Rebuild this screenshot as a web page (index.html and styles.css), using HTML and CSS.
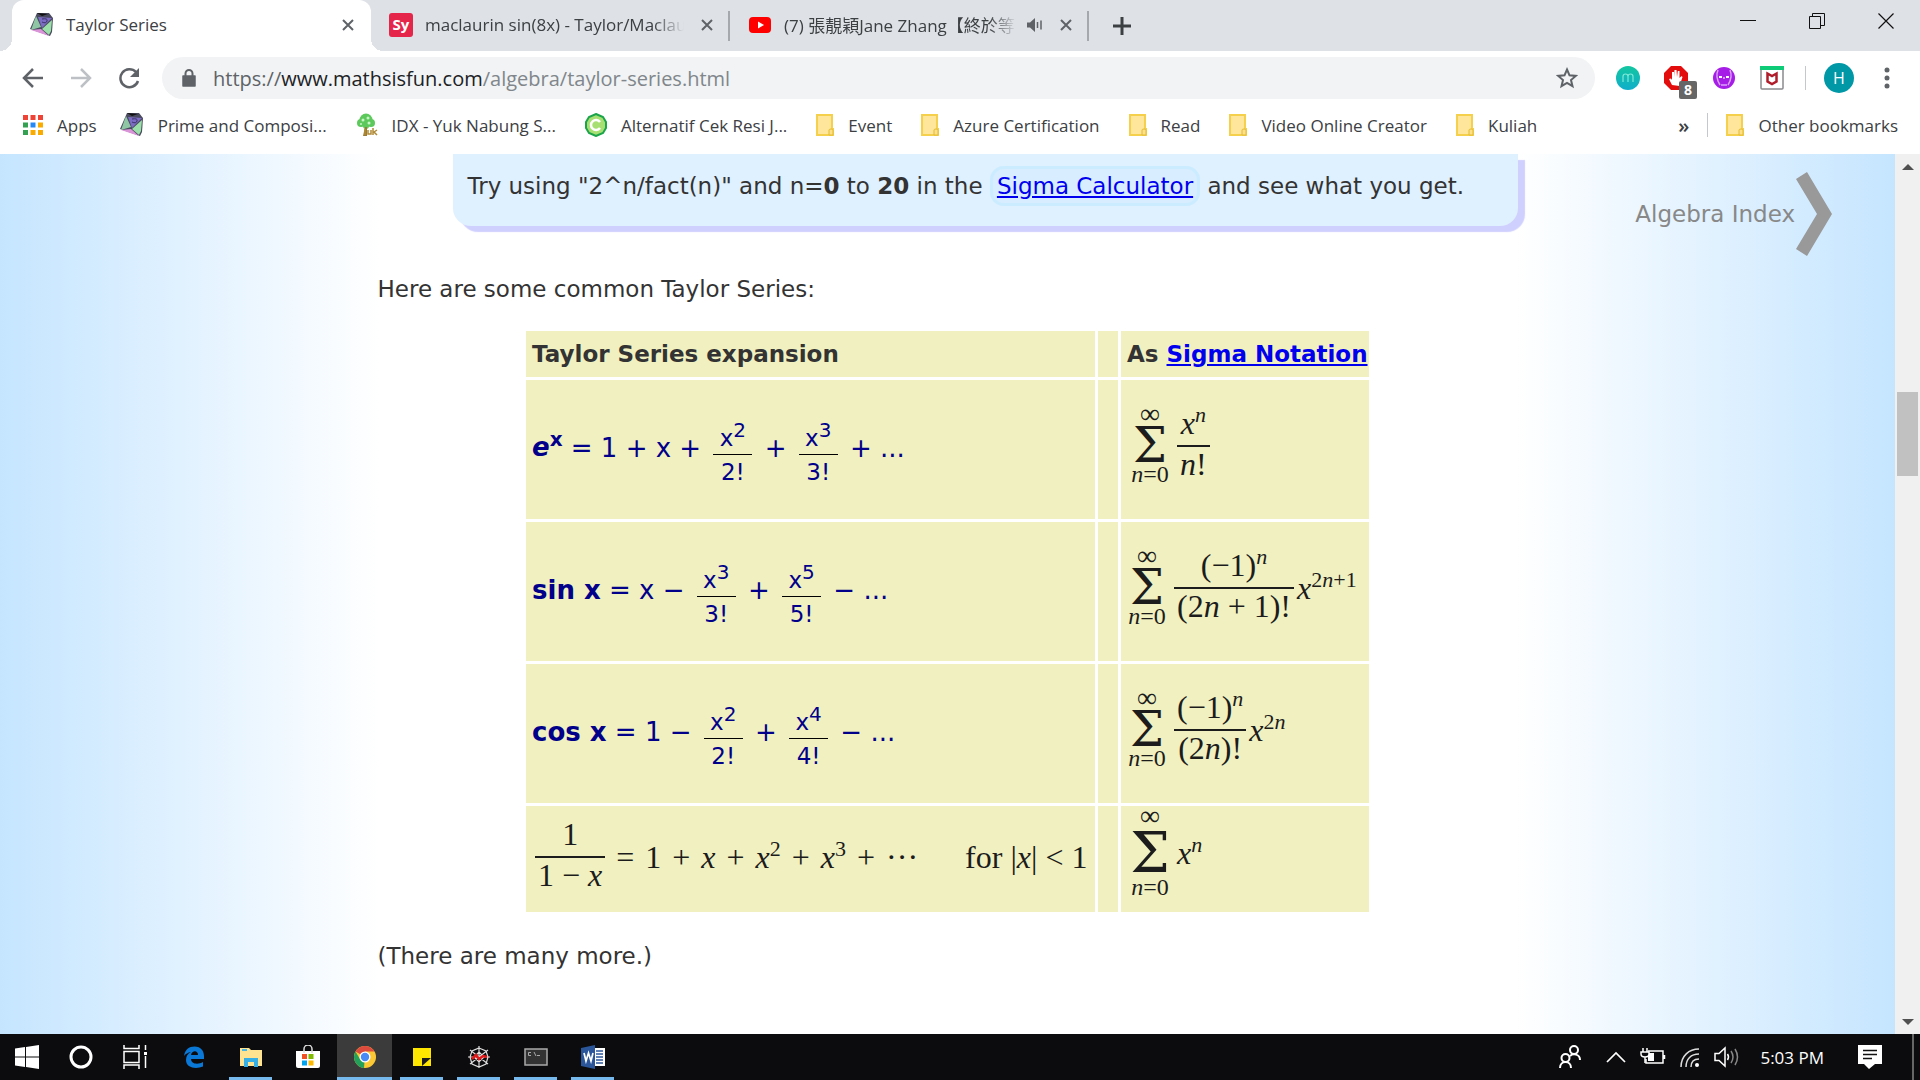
FILE: index.html
```html
<!DOCTYPE html>
<html lang="en">
<head>
<meta charset="utf-8">
<title>Taylor Series</title>
<link rel="stylesheet" href="styles.css">
</head>
<body>
<svg class="defs" aria-hidden="true">
  <symbol id="kite" viewBox="0 0 24 24">
    <path d="M7 0h12l4 5-1 14-2 4L0 16z" fill="#4a4a60"/>
    <path d="M6 3l5 11-10 3z" fill="#8fc7a4"/>
    <path d="M8 4l14 1-10 10z" fill="#7c6cc4"/>
    <path d="M12 16l10-9-1 11-2 4z" fill="#9be0a8"/>
    <path d="M1 17l10-1 8 7z" fill="#d995d8"/>
    <path d="M7 0l11 1-6 2z" fill="#111"/>
    <path d="M12 6q6-1 5 2t-5 1" fill="none" stroke="#3b3168"/>
  </symbol>
  <symbol id="folder" viewBox="0 0 18 22">
    <path d="M1 1h15v14h1v6H1z" fill="#ffe69a" stroke="#f5d04c" stroke-width="2"/>
    <path d="M13 21v-5q0-1 2-1t2 1v5z" fill="#ffe08a" stroke="#e2bb33"/>
  </symbol>
  <symbol id="cross" viewBox="0 0 14 14">
    <path d="M2 2 12 12M12 2 2 12" fill="none" stroke="#5f6368" stroke-width="2"/>
  </symbol>
</svg>

<header class="browser">
  <div class="tabs">
    <div class="tab tab-active">
      <svg class="fav" viewBox="0 0 24 24"><use href="#kite"/></svg>
      <span class="tab-title">Taylor Series</span>
      <button class="tab-close" aria-label="Close tab"><svg width="14" height="14"><use href="#cross"/></svg></button>
    </div>
    <div class="tab">
      <span class="fav fav-sy">Sy</span>
      <span class="tab-title fade">maclaurin sin(8x) - Taylor/Maclau</span>
      <button class="tab-close" aria-label="Close tab"><svg width="14" height="14"><use href="#cross"/></svg></button>
    </div>
    <div class="tab tab-last">
      <svg class="fav" viewBox="0 0 24 24"><rect x="1" y="4" width="22" height="16" rx="4" fill="#f00"/><path d="M10 8.500v7l6-3.500z" fill="#fff"/></svg>
      <span class="tab-title fade">(7) 張靚穎Jane Zhang【終於等</span>
      <svg class="speaker" viewBox="0 0 16 14"><path d="M0 4.500h3L8 0v14L3 9.500H0z" fill="#5f6368"/><path d="M10.500 4v6M14 2.500v9" stroke="#5f6368" stroke-width="1.500"/></svg>
      <button class="tab-close" aria-label="Close tab"><svg width="14" height="14"><use href="#cross"/></svg></button>
    </div>
    <button class="new-tab" aria-label="New tab"><svg width="18" height="18" viewBox="0 0 18 18"><path d="M9 0v18M0 9h18" stroke="#3c4043" stroke-width="3"/></svg></button>
    <div class="win-controls">
      <button aria-label="Minimize"><svg width="16" height="16" viewBox="0 0 16 16"><path d="M0 7.500h16" stroke="#111"/></svg></button>
      <button aria-label="Restore"><svg width="16" height="16" viewBox="0 0 16 16"><path d="M.5 3.500h11v12H.5zM3.500 3.500v-3h12v12h-4" fill="none" stroke="#111"/></svg></button>
      <button aria-label="Close"><svg width="16" height="16" viewBox="0 0 16 16"><path d="M.5.5l15 15M15.500.5l-15 15" stroke="#111" stroke-width="1.200"/></svg></button>
    </div>
  </div>

  <div class="toolbar">
    <nav class="nav-buttons">
      <button aria-label="Back"><svg width="22" height="22" viewBox="0 0 22 22"><path d="M21 11H3M11 2 2 11l9 9" fill="none" stroke="#5f6368" stroke-width="2.500"/></svg></button>
      <button aria-label="Forward"><svg width="22" height="22" viewBox="0 0 22 22"><path d="M1 11h18M11 2l9 9-9 9" fill="none" stroke="#bdc1c6" stroke-width="2.500"/></svg></button>
      <button aria-label="Reload"><svg width="22" height="22" viewBox="0 0 22 22"><path d="M18 5a9 9 0 1 0 2 9" fill="none" stroke="#5f6368" stroke-width="2.500"/><path d="M21 1v9h-9z" fill="#5f6368"/></svg></button>
    </nav>
    <div class="omnibox">
      <svg width="14" height="18" viewBox="0 0 14 18"><path d="M1 7h12v10H1z" fill="#5f6368" stroke="#5f6368" stroke-linejoin="round" stroke-width="1.500"/><path d="M3.500 7V4.500a3.500 3.500 0 0 1 7 0V7" fill="none" stroke="#5f6368" stroke-width="2"/></svg>
      <span class="url"><span class="scheme">https://</span>www.mathsisfun.com<span class="path">/algebra/taylor-series.html</span></span>
      <button class="star" aria-label="Bookmark this page"><svg width="22" height="22" viewBox="0 0 22 22"><path d="M11 2.500l2.500 5.800 6.300.6-4.800 4.100 1.500 6.200L11 15.900l-5.500 3.300L7 13 2.200 8.900l6.300-.6z" fill="none" stroke="#5f6368" stroke-width="2"/></svg></button>
    </div>
    <div class="extensions">
      <svg width="24" height="24" viewBox="0 0 24 24"><defs><linearGradient id="g" x2="0" y2="1"><stop stop-color="#13c6a0"/><stop offset="1" stop-color="#10aecb"/></linearGradient></defs><circle cx="12" cy="12" r="12" fill="url(#g)"/><path d="M7 16v-5.500a2.500 2.500 0 0 1 5 0V16m0-5.500a2.500 2.500 0 0 1 5 0V16" fill="none" stroke="#7fe9d8" stroke-width="1.200"/></svg>
      <span class="blocker">
        <svg width="24" height="24" viewBox="0 0 24 24"><path d="M7 0h10l7 7v10l-7 7H7l-7-7V7z" fill="#e40d0d"/><path d="M8 19l-3-6 2-.5L8 14V6h2v5l.5-7h2l.5 7 .8-6h1.700v7l2-2 1 1-3 9z" fill="#fff"/></svg>
        <span class="badge">8</span>
      </span>
      <svg width="24" height="24" viewBox="0 0 24 24"><circle cx="12" cy="12" r="11" fill="#a71de8"/><path d="M6 4q-3 7 2 15M18 4q3 7-2 15M9 19h6" fill="none" stroke="#d9a4f8" stroke-width="1.500"/><path d="M7 11h3m1.500 1h1m1.500-1h3" stroke="#fff" stroke-width="2"/></svg>
      <svg width="24" height="24" viewBox="0 0 24 24"><rect x="1" y="1" width="22" height="22" rx="1" fill="#fff" stroke="#8a8a8e" stroke-width="1.500"/><path d="M0 0h24v4H0z" fill="#0ecb78"/><path d="M7.500 7.500l4.500 2.500 4.500-2.500v8L12 18l-4.500-2.500z" fill="none" stroke="#b01c2a" stroke-width="2.500"/></svg>
      <span class="divider"></span>
      <span class="avatar">H</span>
      <button aria-label="Menu"><svg width="6" height="24" viewBox="0 0 6 24"><g fill="#5f6368"><circle cx="3" cy="4" r="2.500"/><circle cx="3" cy="12" r="2.500"/><circle cx="3" cy="20" r="2.500"/></g></svg></button>
    </div>
  </div>

  <nav class="bookmarks">
    <a href="#" class="apps"><svg width="20" height="20" viewBox="0 0 20 20"><path d="M0 0h5v5H0zM7.500 0h5v5h-5zM15 0h5v5h-5z" fill="#ef4336"/><path d="M0 7.500h5v5H0zM0 15h5v5H0z" fill="#34a052"/><path d="M7.500 7.500h5v5h-5z" fill="#2489f4"/><path d="M15 7.500h5v5h-5zM7.500 15h5v5h-5zM15 15h5v5h-5z" fill="#f9ab00"/></svg>Apps</a>
    <a href="#"><svg width="24" height="24"><use href="#kite"/></svg>Prime and Composi...</a>
    <a href="#"><svg width="22" height="24" viewBox="0 0 22 24"><g fill="#5dc95c"><circle cx="10" cy="7" r="6.500"/><circle cx="5" cy="10" r="4"/><circle cx="15" cy="10" r="4"/><circle cx="10" cy="13" r="3"/></g><g fill="#c8f3c4"><circle cx="7" cy="7" r="1.500"/><circle cx="12" cy="5" r="1.500"/><circle cx="13" cy="10" r="1.500"/><circle cx="5" cy="11" r="1"/></g><path d="M9 14h2v9H7z" fill="#9b7a33"/><path d="M9 16v6M12 17v4h3v-4M17 15v7M21 17l-3 2 3 3" fill="none" stroke="#b18a35" stroke-width="1.500"/></svg>IDX - Yuk Nabung S...</a>
    <a href="#"><svg width="22" height="24" viewBox="0 0 22 24"><path d="M11 1l7 3 3 5v6l-3 5-7 3-7-3-3-5V9l3-5z" fill="#a7df72" stroke="#1ba54a" stroke-width="2"/><path d="M15 9a5 5 0 1 0 0 6" fill="none" stroke="#fff" stroke-width="2.500"/></svg>Alternatif Cek Resi J...</a>
    <a href="#"><svg width="18" height="22"><use href="#folder"/></svg>Event</a>
    <a href="#"><svg width="18" height="22"><use href="#folder"/></svg>Azure Certification</a>
    <a href="#"><svg width="18" height="22"><use href="#folder"/></svg>Read</a>
    <a href="#"><svg width="18" height="22"><use href="#folder"/></svg>Video Online Creator</a>
    <a href="#"><svg width="18" height="22"><use href="#folder"/></svg>Kuliah</a>
    <div class="tail">
      <button class="more" aria-label="More bookmarks">»</button>
      <span class="divider"></span>
      <a href="#"><svg width="18" height="22"><use href="#folder"/></svg>Other bookmarks</a>
    </div>
  </nav>
</header>

<div class="viewport">
  <main class="page">
    <a class="index-link" href="#">Algebra Index<svg width="38" height="86" viewBox="0 0 38 86"><path d="M1 8 12 1 37 43 12 85 1 78 22 43z" fill="#999"/></svg></a>
    <article class="article">
      <div class="tip">Try using "2^n/fact(n)" and n=<b>0</b> to <b>20</b> in the <a class="calc" href="#">Sigma Calculator</a> and see what you get.</div>
      <p>Here are some common Taylor Series:</p>
      <table class="series">
        <tr><th class="main-col">Taylor Series expansion</th><th class="gap-col"></th><th class="sigma-col">As <a href="#">Sigma Notation</a></th></tr>
        <tr class="tall">
          <td><div class="expansion"><b><i>e</i><sup>x</sup></b> = 1 + x + <span class="frac"><span>x<sup>2</sup></span><span>2!</span></span> + <span class="frac"><span>x<sup>3</sup></span><span>3!</span></span> + ...</div></td>
          <td></td>
          <td><div class="tex tex-in">
            <span class="sum"><span class="upper">∞</span><span class="sigma">Σ</span><span class="lower"><i>n</i>=0</span></span>
            <span class="tfrac"><span><i>x<sup>n</sup></i></span><span><i>n</i>!</span></span>
          </div></td>
        </tr>
        <tr class="tall">
          <td><div class="expansion"><b>sin x</b> = x − <span class="frac"><span>x<sup>3</sup></span><span>3!</span></span> + <span class="frac"><span>x<sup>5</sup></span><span>5!</span></span> − ...</div></td>
          <td></td>
          <td><div class="tex">
            <span class="sum"><span class="upper">∞</span><span class="sigma">Σ</span><span class="lower"><i>n</i>=0</span></span>
            <span class="tfrac"><span>(−1)<sup><i>n</i></sup></span><span>(2<i>n</i> + 1)!</span></span>
            <span class="power"><i>x</i><sup>2<i>n</i>+1</sup></span>
          </div></td>
        </tr>
        <tr class="tall">
          <td><div class="expansion"><b>cos x</b> = 1 − <span class="frac"><span>x<sup>2</sup></span><span>2!</span></span> + <span class="frac"><span>x<sup>4</sup></span><span>4!</span></span> − ...</div></td>
          <td></td>
          <td><div class="tex">
            <span class="sum"><span class="upper">∞</span><span class="sigma">Σ</span><span class="lower"><i>n</i>=0</span></span>
            <span class="tfrac"><span>(−1)<sup><i>n</i></sup></span><span>(2<i>n</i>)!</span></span>
            <span class="power"><i>x</i><sup>2<i>n</i></sup></span>
          </div></td>
        </tr>
        <tr class="last">
          <td><div class="tex tex-in geo">
            <span class="tfrac"><span>1</span><span>1 − <i>x</i></span></span>
            <span>=</span><span>1</span><span>+</span><span><i>x</i></span><span>+</span><span><i>x</i><sup>2</sup></span><span>+</span><span><i>x</i><sup>3</sup></span><span>+</span><span>···</span>
            <span class="cond">for |<i>x</i>| &lt; 1</span>
          </div></td>
          <td></td>
          <td><div class="tex tex-in tex-big">
            <span class="sum"><span class="upper">∞</span><span class="sigma">Σ</span><span class="lower"><i>n</i>=0</span></span>
            <span><i>x<sup>n</sup></i></span>
          </div></td>
        </tr>
      </table>
      <p>(There are many more.)</p>
    </article>
  </main>
  <div class="scrollbar">
    <svg width="12" height="6" viewBox="0 0 12 6"><path d="M6 0l6 6H0z" fill="#505050"/></svg>
    <div class="track"><div class="thumb"></div></div>
    <svg width="12" height="6" viewBox="0 0 12 6"><path d="M0 0h12L6 6z" fill="#505050"/></svg>
  </div>
</div>

<footer class="taskbar">
  <div class="launch">
    <button class="system" aria-label="Start"><svg width="24" height="24" viewBox="0 0 24 24"><path d="M0 3.500l10-1.500v9.500H0zM11 2l13-2v11.500H11zM0 12.500h10V22L0 20.500zM11 12.500h13V24l-13-2z" fill="#fff"/></svg></button>
    <button class="system" aria-label="Search"><svg width="24" height="24" viewBox="0 0 24 24"><circle cx="12" cy="12" r="10" fill="none" stroke="#fff" stroke-width="3"/></svg></button>
    <button class="system" aria-label="Task view"><svg width="24" height="24" viewBox="0 0 24 24"><path d="M1 0v3.500h15V0M1 6.500h15v11H1zM1 24v-4h15v4M22.500 0v5M22.500 11v12" fill="none" stroke="#fff" stroke-width="1.500"/><path d="M21 7h3v3h-3z" fill="#fff"/></svg></button>
    <button aria-label="Edge"><svg width="24" height="24" viewBox="0 0 24 24"><path d="M2 11C3 4.500 7 1.500 12.500 1.500 19 1.500 22 6 22 11v3H9c0 5 7 6 12 3v4.500C14 24.500 4 23 4 15c0-4 2-6.500 5-8-3 .500-5.500 2-7 4zM9 10h7c0-5-6-5-7 0z" fill="#0a78d6" fill-rule="evenodd"/></svg></button>
    <button aria-label="File Explorer" class="open"><svg width="24" height="24" viewBox="0 0 24 24"><path d="M1 3h9l2 2h11v16H1z" fill="#ffe391"/><path d="M3 4h5v2H3z" fill="#49b6e8"/><path d="M5 22v-9h14v9h-4v-5H9v5z" fill="#36aee6"/></svg></button>
    <button aria-label="Store"><svg width="24" height="24" viewBox="0 0 24 24"><path d="M0 6h24v15q0 2-2 2H2q-2 0-2-2z" fill="#fff"/><path d="M8 8V4a4 4 0 0 1 8 0v4" fill="none" stroke="#ddd" stroke-width="1.500"/><path d="M6 9h5v5H6z" fill="#f25022"/><path d="M12.500 9h5v5h-5z" fill="#7fba00"/><path d="M6 15.500h5v5H6z" fill="#00a4ef"/><path d="M12.500 15.500h5v5h-5z" fill="#ffb900"/></svg></button>
    <button aria-label="Chrome" class="open current"><svg width="24" height="24" viewBox="0 0 24 24"><circle cx="12" cy="12" r="11" fill="#fcc934"/><path d="M12 12 2.500 6.500A11 11 0 0 1 21.500 6.500H12z" fill="#dd4b3e"/><path d="M2.500 6.500 7.500 15l4 1L11 23A11 11 0 0 1 2.500 6.500z" fill="#23a05a"/><circle cx="12" cy="12" r="5.500" fill="#fff"/><circle cx="12" cy="12" r="4.200" fill="#4a8af4"/></svg></button>
    <button aria-label="Sticky Notes" class="open"><svg width="24" height="24" viewBox="0 0 24 24"><path d="M3 3h18v18H3z" fill="#ffe600"/><path d="M12 21v-8h9z" fill="#1b1b1b"/></svg></button>
    <button aria-label="Spyder" class="open"><svg width="24" height="24" viewBox="0 0 24 24"><path d="M12 1v22M3 5l18 14M3 19 21 5M1 12h22M12 3l7 3 2 6-2 7-7 3-7-3-2-7 2-6zM12 7l5 5-5 5-5-5z" fill="none" stroke="#ddd" stroke-width="1.200"/><path d="M5 14l4-4 3 4 4-3 4 1" fill="none" stroke="#e01818" stroke-width="2.500"/></svg></button>
    <button aria-label="Command Prompt" class="open"><svg width="24" height="24" viewBox="0 0 24 24"><rect x="1" y="4" width="22" height="16" fill="#333" stroke="#aaa" stroke-width="1.500"/><path d="M7 7.500H4.500v3H7M8.500 8v0M8.500 10.500v0M10 7l2 4M13 10.500h3" fill="none" stroke="#aaa"/></svg></button>
    <button aria-label="Word" class="open"><svg width="24" height="24" viewBox="0 0 24 24"><path d="M12 3h12v18H12z" fill="#fff"/><path d="M15 6h7M15 9h7M15 12h7M15 15h7M15 18h7" stroke="#2b579a" stroke-width="1.500"/><path d="M0 3l14-3v24L0 21z" fill="#2b579a"/><path d="M3 8l2 8 2.500-8 2.500 8 2-8" fill="none" stroke="#fff" stroke-width="1.700"/></svg></button>
  </div>
  <div class="tray">
    <svg class="people" width="24" height="24" viewBox="0 0 24 24"><g fill="none" stroke="#fff" stroke-width="2"><circle cx="16" cy="5" r="4"/><circle cx="7.500" cy="13" r="4"/><path d="M2 23c0-8 11-8 11 0M12 11c3-3 10-2 10 4"/></g></svg>
    <svg width="20" height="24" viewBox="0 0 20 24"><path d="M1 17 10 8l9 9" fill="none" stroke="#fff" stroke-width="1.700"/></svg>
    <svg width="26" height="24" viewBox="0 0 26 24"><path d="M8 6h15v12H6v-4M24.500 10v4" fill="none" stroke="#fff" stroke-width="1.500"/><path d="M8 8h6v8H8z" fill="#fff"/><path d="M3 3v4M7 3v4M1 7h8v2q0 3-4 3t-4-3zM5 12v6" fill="#0c0c0e" stroke="#fff" stroke-width="1.500"/></svg>
    <svg width="20" height="24" viewBox="0 0 20 24"><g fill="none" stroke="#ddd" stroke-width="1.500"><path d="M1 22C1 11 9 4 19 4M6 22C6 14 11 9 19 9M11 22c0-5 3-8 8-8"/></g><circle cx="17" cy="20" r="2" fill="#fff"/></svg>
    <svg width="26" height="24" viewBox="0 0 26 24"><path d="M1 8.500h4l6-5.500v18l-6-5.500H1z" fill="none" stroke="#fff" stroke-width="1.500"/><path d="M13.500 9q2 3 0 6" fill="none" stroke="#fff" stroke-width="1.500"/><path d="M17 6q4 6 0 12M21 4q5 8 0 16" fill="none" stroke="#888" stroke-width="1.500"/></svg>
    <time>5:03 PM</time>
    <svg width="24" height="24" viewBox="0 0 24 24"><path d="M0 0h24v19h-7l-6 5-5-5H0z" fill="#fff"/><path d="M5 5.500h14M5 9.500h14M5 13.500h9" stroke="#111" stroke-width="1.300"/></svg>
    <span class="show-desktop"></span>
  </div>
</footer>
</body>
</html>
```
FILE: styles.css
```css
* { box-sizing: border-box; }

body {
  margin: 0;
  height: 100vh;
  display: flex;
  flex-direction: column;
  overflow: hidden;
  font-family: "Open Sans", "Noto Sans CJK TC", sans-serif;
  color: #3c4043;
}

button {
  border: 0;
  padding: 0;
  background: none;
  font: inherit;
  color: inherit;
  display: flex;
  align-items: center;
  justify-content: center;
}

svg { display: block; flex: none; }
.defs { position: absolute; width: 0; height: 0; }

/* Browser chrome */
.browser { flex: none; font-size: 17px; background: #fff; }

.tabs { display: flex; height: 51px; padding-left: 12px; background: #dee1e6; }
.tab {
  position: relative;
  display: flex;
  align-items: center;
  width: 359px;
  padding: 0 16px 2px 18px;
}
.tab-active { background: #fff; border-radius: 12px 12px 0 0; }
.tab-active::before,
.tab-active::after {
  content: "";
  position: absolute;
  bottom: 0;
  width: 12px;
  height: 12px;
}
.tab-active::before { left: -12px; background: radial-gradient(circle at 0 0, #dee1e6 12px, #fff 12px); }
.tab-active::after { right: -12px; background: radial-gradient(circle at 100% 0, #dee1e6 12px, #fff 12px); }
.tab:not(.tab-active)::after {
  content: "";
  position: absolute;
  right: 0;
  top: 11px;
  width: 2px;
  height: 30px;
  background: #a5a8ad;
}
.fav { width: 24px; height: 24px; flex: none; }
.fav-sy {
  background: #e5254a;
  border-radius: 3px;
  color: #fff;
  font-size: 15px;
  line-height: 22px;
  font-weight: 700;
  text-align: center;
}
.tab-title { flex: 1; margin-left: 12px; overflow: hidden; white-space: nowrap; }
.fade { -webkit-mask-image: linear-gradient(90deg, #000 88%, transparent); mask-image: linear-gradient(90deg, #000 88%, transparent); }
.speaker { width: 16px; height: 14px; margin-left: 10px; }
.tab-close { margin-left: 16px; }
.new-tab { width: 66px; }
.win-controls { display: flex; margin-left: auto; height: 42px; }
.win-controls button { width: 69px; }

.toolbar { display: flex; align-items: center; height: 54px; }
.nav-buttons { display: flex; gap: 26px; padding: 0 22px; }
.omnibox {
  flex: 1;
  display: flex;
  align-items: center;
  height: 42px;
  padding: 0 17px 0 20px;
  border-radius: 21px;
  background: #f1f3f4;
  font-size: 20px;
  color: #202124;
}
.url { margin-left: 17px; flex: 1; }
.scheme { color: #5f6368; }
.path { color: #80868b; }
.extensions { display: flex; align-items: center; gap: 24px; padding: 0 30px 0 21px; }
.extensions .divider { margin-left: -3px; }
.blocker { position: relative; }
.badge {
  position: absolute;
  left: 15px;
  top: 15px;
  width: 18px;
  height: 18px;
  border-radius: 2px;
  background: #666;
  color: #fff;
  font-size: 14px;
  line-height: 18px;
  font-weight: 700;
  text-align: center;
}
.divider { width: 1px; height: 24px; background: #c4c7cb; }
.avatar {
  width: 30px;
  height: 30px;
  margin: 0 6px 0 -6px;
  border-radius: 50%;
  background: #0097a7;
  color: #fff;
  font-size: 16px;
  line-height: 30px;
  text-align: center;
}

.bookmarks { display: flex; align-items: center; height: 49px; padding: 0 22px 9px 23px; gap: 29px; }
.bookmarks a { display: flex; align-items: center; gap: 14px; color: inherit; text-decoration: none; white-space: nowrap; }
.bookmarks .apps { margin-right: -6px; }
.tail { display: flex; align-items: center; gap: 18px; margin-left: auto; }
.more { font-size: 20px; font-weight: 600; }

/* Web page */
.viewport { flex: 1; display: flex; min-height: 0; }
.page {
  flex: 1;
  position: relative;
  background: linear-gradient(90deg, #c5e5ff, #fff 20%, #fff 80%, #c5e5ff);
  font-family: "DejaVu Sans", sans-serif;
  font-size: 23px;
  line-height: 32px;
  color: #333;
}
.article { max-width: 1140px; margin: 0 auto; }
.article p { margin: 0; }
.index-link {
  position: absolute;
  right: 62px;
  top: 17px;
  display: flex;
  align-items: center;
  color: #888;
  text-decoration: none;
}
.tip {
  margin: 0 0 47px 75px;
  padding: 16px 15px 24px;
  border-radius: 0 0 18px 18px;
  background: #dff0ff;
  box-shadow: 7px 6px 1px #d0d0ff;
}
a { color: #00e; }
.calc { padding: 4px; border: 3px solid #cbecff; border-radius: 14px; background: #d8edff; }

.series { margin: 23px auto 25px; border-spacing: 3px; }
.series th, .series td { background: #f0f0c0; padding: 0 0 0 6px; text-align: left; }
.series th { height: 46px; white-space: nowrap; }
.main-col { width: 569px; }
.series .gap-col { width: 20px; }
.sigma-col { width: 248px; }
.tall td { height: 139px; }
.last td { height: 106px; }

/* Fractions set in the page's own font */
.expansion { padding-bottom: 2px; font-size: 26px; color: #00008b; white-space: nowrap; }
.expansion sup { font-size: 20px; line-height: 0; }
.frac {
  display: inline-flex;
  flex-direction: column;
  width: 39px;
  margin: 0 4px;
  padding-top: 12px;
  font-size: 23px;
  line-height: 28px;
  text-align: center;
  vertical-align: middle;
}
.frac > span:first-child { padding-bottom: 2px; border-bottom: 1px solid #000; }
.frac > span:last-child { padding-top: 3px; }

/* Formulas set in a serif face */
.tex {
  display: flex;
  align-items: center;
  gap: 7px;
  padding-bottom: 8px;
  font-family: "Liberation Serif", serif;
  font-size: 32px;
  line-height: 34px;
  color: #1c1c1c;
  white-space: nowrap;
}
.tex sup { font-size: 22px; line-height: 0; }
.tex-in { padding-left: 3px; }
.tex-big { padding-bottom: 12px; }
.sum { display: flex; flex-direction: column; align-items: center; min-width: 40px; }
.upper { padding-bottom: 6px; font-size: 28px; line-height: 14px; }
.sigma { font-family: "DejaVu Serif", serif; font-size: 48px; line-height: 37px; }
.lower { font-size: 24px; line-height: 20px; }
.tex-big .sigma { font-size: 56px; line-height: 48px; }
.tfrac { display: flex; flex-direction: column; text-align: center; }
.tfrac > span { padding: 0 3px 5px; }
.tfrac > span:first-child { border-bottom: 2px solid #1c1c1c; }
.power { margin-left: -4px; }
.geo { gap: 11px; padding-bottom: 4px; }
.cond { margin-left: 36px; }

.scrollbar { width: 25px; display: flex; flex-direction: column; align-items: center; padding: 10px 0 9px; background: #f0f0f0; }
.track { flex: 1; width: 21px; padding-top: 222px; }
.thumb { height: 84px; background: #c1c1c1; }

/* Taskbar */
.taskbar { flex: none; display: flex; justify-content: space-between; height: 46px; background: #0c0c0e; color: #fff; }
.launch { display: flex; }
.launch button { width: 57px; border: solid transparent; border-width: 3px 0; }
.launch .system { width: 54px; }
.launch .system + :not(.system) { margin-left: 3px; }
.launch .open { width: 43px; margin: 0 7px; border-bottom-color: #76b9ed; }
.launch .current { width: 55px; margin: 0 1px; background-color: #3b3b3c; }
.tray { display: flex; align-items: center; gap: 14px; font-size: 17px; }
.people { margin-right: 10px; }
.tray time { margin: 0 20px 0 6px; }
.show-desktop { width: 2px; height: 46px; margin: 0 6px 0 16px; background: #666; }
```
